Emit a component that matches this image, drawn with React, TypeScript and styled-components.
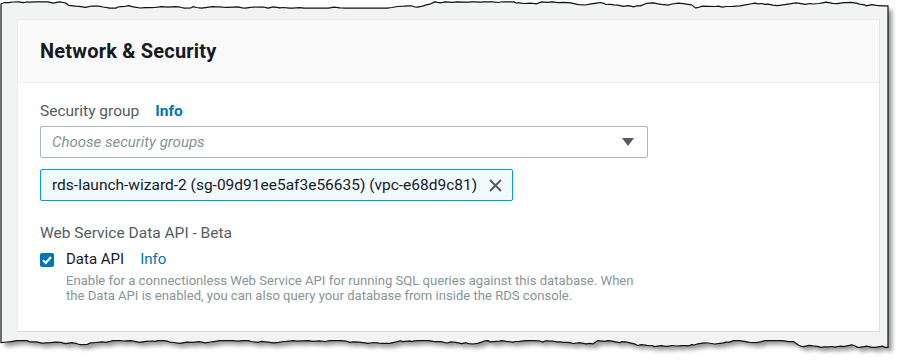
import React from 'react';
import styled, { createGlobalStyle } from 'styled-components';

const GlobalStyle = createGlobalStyle`
  html, body {
    margin: 0;
    padding: 0;
    background: #ffffff;
  }
  body {
    font-family: Roboto, "Noto Sans", Arial, sans-serif;
    -webkit-font-smoothing: antialiased;
  }
`;

// seeded random so the torn edge is the same every render
const makeRand = (seed: number) => {
  let s = seed;
  return () => {
    s = (s * 16807) % 2147483647;
    return (s - 1) / 2147483646;
  };
};

const tornEdge = (y0: number, amp: number, x0: number, x1: number, seed: number) => {
  const rand = makeRand(seed);
  const pts: [number, number][] = [];
  let y = y0;
  let x = x0;
  while (x < x1) {
    y += (rand() - 0.5) * amp;
    if (rand() > 0.94) y += (rand() - 0.5) * amp * 2.5;
    y = Math.max(y0 - amp * 1.2, Math.min(y0 + amp * 1.2, y));
    pts.push([x, y]);
    x += 2 + rand() * 5;
  }
  pts.push([x1, y]);
  return pts;
};

const PAPER_LEFT = 1;
const PAPER_RIGHT = 888;

const paperPath = () => {
  const top = tornEdge(5, 2.6, PAPER_LEFT, PAPER_RIGHT, 11);
  const bottom = tornEdge(344, 2.8, PAPER_LEFT, PAPER_RIGHT, 29).reverse();
  const p = [...top, ...bottom].map(([x, y], i) => `${i === 0 ? 'M' : 'L'}${x.toFixed(1)} ${y.toFixed(1)}`);
  return p.join(' ') + ' Z';
};

const PAPER_D = paperPath();

const TornPaper = () => (
  <EdgeSvg width="900" height="362" viewBox="0 0 900 362">
    <defs>
      <filter id="paperShadow" x="-5%" y="-5%" width="110%" height="120%">
        <feGaussianBlur stdDeviation="2" />
      </filter>
    </defs>
    <path d={PAPER_D} transform="translate(4 4)" fill="#6b6b6b" opacity="0.7" filter="url(#paperShadow)" />
    <path d={PAPER_D} fill="#f2f3f3" stroke="#111" strokeWidth="1.2" strokeLinejoin="round" />
  </EdgeSvg>
);

const App = () => (
  <>
    <GlobalStyle />
    <Page>
      <TornPaper />
      <Paper>
        <Card>
          <CardHeader>
            <Title>Network &amp; Security</Title>
          </CardHeader>
          <CardBody>
            <FieldLabel>
              Security group <InfoLink $bold>Info</InfoLink>
            </FieldLabel>
            <Select>
              <Placeholder>Choose security groups</Placeholder>
              <Caret />
            </Select>
            <Token>
              <TokenText>rds-launch-wizard-2 (sg-09d91ee5af3e56635) (vpc-e68d9c81)</TokenText>
              <svg width="15" height="15" viewBox="0 0 15 15">
                <path d="M2 2 L13 13 M13 2 L2 13" stroke="#545b64" strokeWidth="1.8" fill="none" />
              </svg>
            </Token>
            <SectionLabel>Web Service Data API - Beta</SectionLabel>
            <CheckRow>
              <Checkbox>
                <svg width="14" height="14" viewBox="0 0 14 14">
                  <path d="M3 7.2 L5.8 10 L11 4" stroke="#fff" strokeWidth="2.2" fill="none" />
                </svg>
              </Checkbox>
              <CheckContent>
                <CheckLabel>
                  Data API <InfoLink>Info</InfoLink>
                </CheckLabel>
                <Description>
                  Enable for a connectionless Web Service API for running SQL queries against this database. When
                  the Data API is enabled, you can also query your database from inside the RDS console.
                </Description>
              </CheckContent>
            </CheckRow>
          </CardBody>
        </Card>
      </Paper>
    </Page>
  </>
);

const Page = styled.div`
  position: relative;
  width: 900px;
  height: 362px;
  overflow: hidden;
`;

const EdgeSvg = styled.svg`
  position: absolute;
  left: 0;
  top: 0;
`;

const Paper = styled.div`
  position: relative;
  width: 863px;
  margin-left: 17px;
  padding-top: 19px;
`;

const Card = styled.section`
  background: #ffffff;
  border: 1px solid #eaeded;
  border-right-color: #dfe3e3;
  border-bottom-color: #d5dbdb;
  height: 313px;
  box-sizing: border-box;
`;

const CardHeader = styled.header`
  display: flex;
  align-items: center;
  height: 62px;
  padding: 0 22px;
  background: #fafafa;
  border-bottom: 1px solid #eaeded;
`;

const Title = styled.h2`
  margin: 0;
  font-size: 20px;
  font-weight: 700;
  color: #16191f;
  letter-spacing: 0.2px;
`;

const CardBody = styled.div`
  display: flex;
  flex-direction: column;
  padding: 18px 22px 0;
`;

const FieldLabel = styled.div`
  font-size: 15.5px;
  line-height: 20px;
  color: #545b64;
  display: flex;
  gap: 16px;
`;

const InfoLink = styled.span<{ $bold?: boolean }>`
  color: #0073bb;
  font-weight: ${(p) => (p.$bold ? 700 : 400)};
`;

const Select = styled.div`
  margin-top: 5px;
  width: 608px;
  height: 32px;
  box-sizing: border-box;
  border: 1px solid #aab7b8;
  border-radius: 2px;
  display: flex;
  align-items: center;
  justify-content: space-between;
  padding: 0 13px 0 11px;
`;

const Placeholder = styled.span`
  font-size: 15px;
  font-style: italic;
  color: #879596;
`;

const Caret = styled.span`
  width: 0;
  height: 0;
  border-left: 6px solid transparent;
  border-right: 6px solid transparent;
  border-top: 8px solid #545b64;
`;

const Token = styled.div`
  margin-top: 11px;
  align-self: flex-start;
  height: 32px;
  box-sizing: border-box;
  display: flex;
  align-items: center;
  gap: 11px;
  padding: 0 9px 0 11px;
  background: #f1faff;
  border: 1px solid #00a1c9;
  border-radius: 2px;
`;

const TokenText = styled.span`
  font-size: 15.5px;
  color: #16191f;
`;

const SectionLabel = styled.div`
  margin-top: 22px;
  font-size: 15.5px;
  line-height: 20px;
  color: #545b64;
`;

const CheckRow = styled.div`
  display: flex;
  gap: 12px;
  margin-top: 6px;
`;

const Checkbox = styled.span`
  width: 14px;
  height: 14px;
  margin-top: 4px;
  border-radius: 2px;
  background: #0073bb;
  display: flex;
  align-items: center;
  justify-content: center;
`;

const CheckContent = styled.div`
  display: flex;
  flex-direction: column;
`;

const CheckLabel = styled.div`
  font-size: 15px;
  line-height: 20px;
  color: #16191f;
  display: flex;
  gap: 16px;
`;

const Description = styled.p`
  margin: 4px 0 0;
  width: 575px;
  font-size: 13.1px;
  line-height: 15px;
  color: #879596;
`;

export default App;
